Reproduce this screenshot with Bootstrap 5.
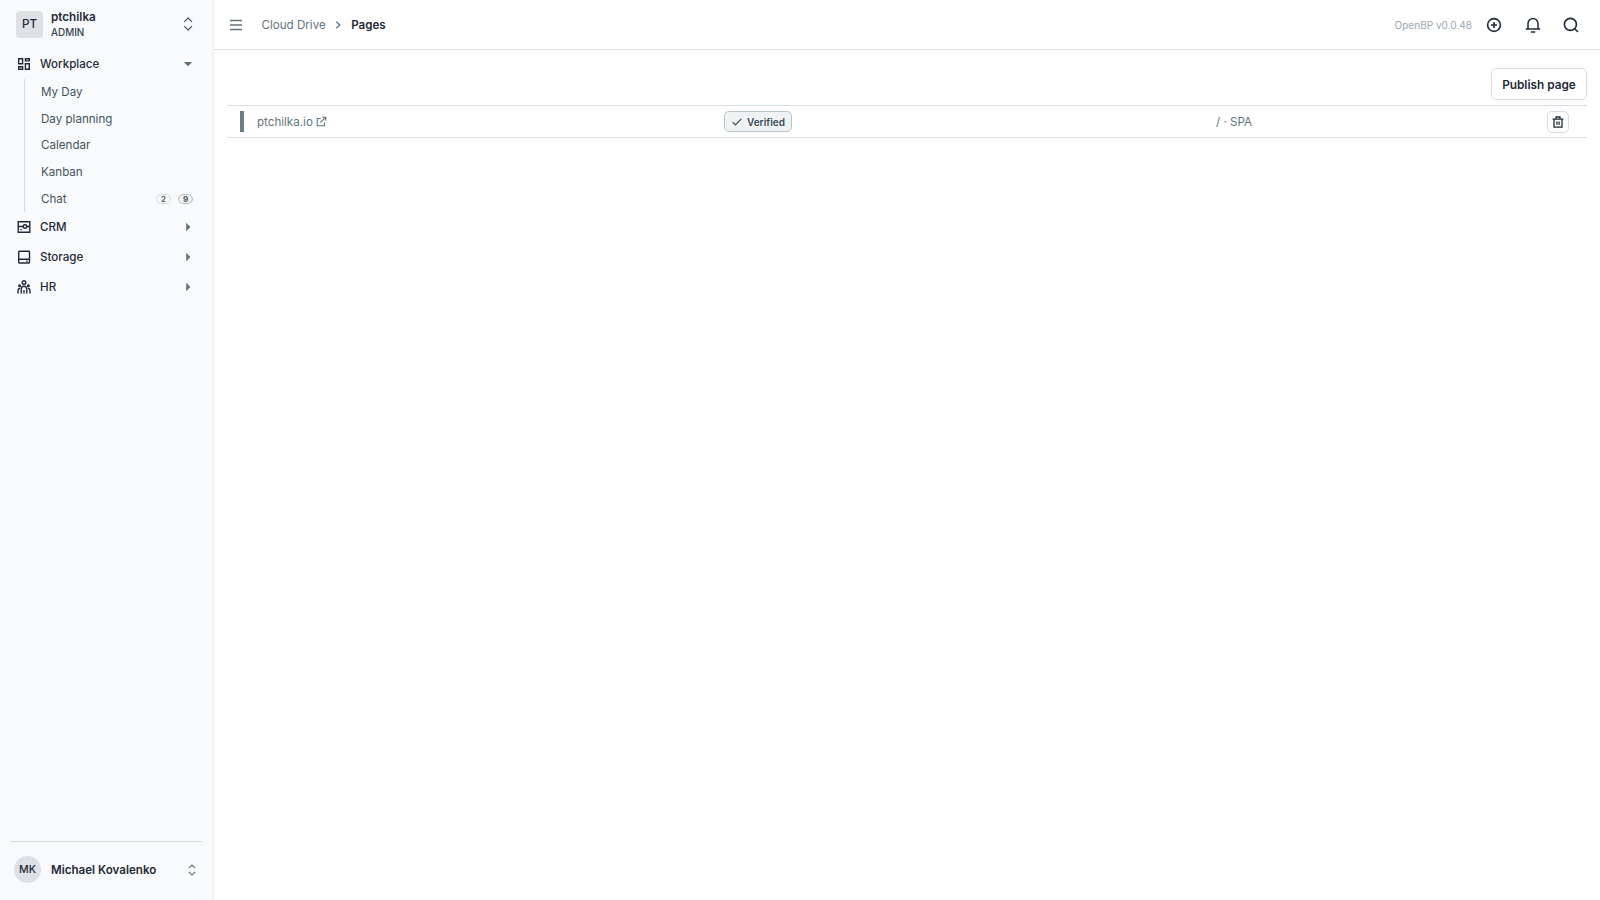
<!DOCTYPE html>
<html lang="en">
<head>
<meta charset="utf-8">
<meta name="viewport" content="width=device-width, initial-scale=1">
<title>Pages</title>
<link rel="stylesheet" href="https://cdn.jsdelivr.net/npm/bootstrap@5.3.0/dist/css/bootstrap.min.css">
<style>
body{font-family:Inter,"Liberation Sans",sans-serif;font-size:11.6px;line-height:16px;color:#1f2a37;background:#fff;fill:none;stroke:currentColor;stroke-width:1.3}
svg{display:block;flex:none}
a{color:inherit;text-decoration:none}
.sidebar{width:214px;background:#f9fafc;border-right:2px solid #f0f2f5}
.org{height:49px;padding:0 17px 1px 16px}
.avatar{width:27px;height:27px;background:#dde0e4;font-weight:500;flex:none}
.org .avatar{border-radius:4px}
.org-text{padding-top:1px}
.org-name{font-size:11.7px;line-height:15px}
.role{font-size:9.9px;line-height:14px;font-weight:500;color:#36454f}
.item{height:30px;padding:0 19px 0 17px;font-weight:500}
.item .caret{fill:#60717a;stroke:none}
.item svg:first-child{margin-right:9px}
.sub{margin-left:24px;margin-right:19px;border-left:1px solid #d5dade;color:#43535e;padding-left:16px}
.sub a{height:26.6px}
.pill{width:15px;height:10px;border:1px solid #d5dcdf;border-radius:5px;font-size:8px;line-height:9px;font-weight:600}
.pill-dark{border-color:#b6c1c5;background:#eef1f2;font-weight:700;margin-left:7px}
.account{height:59px;margin:0 10px;border-top:1px solid #d5dade;padding:1px 5px 4px 4px}
.account .avatar{font-size:10.6px}
.topbar{height:50px;border-bottom:1px solid #d9dee4;padding:0 21px 0 15px}
.soft{color:#63747d}
.version{color:#9ba8b2;font-size:10.05px}
.content{padding:18px 13px 0}
.publish{height:32px;width:96px;border:1px solid #d8dde3;border-radius:5px;background:#fff;font-size:11.8px;font-weight:600;padding:1px 0 0;line-height:16px;color:#1f2a37}
.site{margin-top:5px;height:33px;border-top:1px solid #d9dee4;border-bottom:1px solid #dce2e4;padding:0 18px 0 13px}
.marker{width:4px;height:21px;background:#6c7d85;margin-right:13px}
.col-site{width:467px}
.col-state{width:492px}
.verified{width:68px;height:21px;border:1px solid #b8c5c8;border-radius:5px;background:#eff3f4;font-size:10px;font-weight:600;color:#3a4a54}
.trash{width:22px;height:22px;border:1px solid #d8dde3;border-radius:5px;background:#fff;padding:0;color:#1f2a37}
</style>
</head>
<body>
<div class="d-flex vh-100 overflow-hidden">
  <aside class="sidebar d-flex flex-column flex-shrink-0">
    <div class="org d-flex align-items-center">
      <div class="avatar d-flex align-items-center justify-content-center">PT</div>
      <div class="org-text ms-2 flex-grow-1"><div class="org-name fw-semibold">ptchilka</div><div class="role">ADMIN</div></div>
      <svg width="14" height="14" viewBox="0 0 14 14" stroke="#52626b"><path d="M3.2 4.9L7.1 1l3.9 3.9M3.2 9.1L7.1 13 11 9.1"/></svg>
    </div>
    <nav>
      <a href="#" class="item d-flex align-items-center">
        <svg width="14" height="14" viewBox="0 0 14 14" stroke-width="1.4"><path d="M1.7 1.7h3.9v5.1H1.7zM8.4 1.7h3.9v2.2H8.4zM8.4 6.8h3.9v5.5H8.4zM1.7 9.8h3.9v2.5H1.7z"/></svg>
        <span class="flex-grow-1">Workplace</span>
        <svg class="caret" width="10" height="10" viewBox="0 0 10 10"><path d="M.8 3h8.4L5 7.2z"/></svg>
      </a>
      <div class="sub">
        <a href="#" class="d-flex align-items-center">My Day</a>
        <a href="#" class="d-flex align-items-center">Day planning</a>
        <a href="#" class="d-flex align-items-center">Calendar</a>
        <a href="#" class="d-flex align-items-center">Kanban</a>
        <a href="#" class="d-flex align-items-center"><span class="flex-grow-1">Chat</span><span class="pill text-center">2</span><span class="pill pill-dark text-center">9</span></a>
      </div>
      <a href="#" class="item d-flex align-items-center">
        <svg width="14" height="14" viewBox="0 0 14 14" stroke-width="1.4"><path d="M1.2 1.7h11.6v10.6H1.2zM1.2 6.5h5M9.9 6.5h2.9M3.3 9.6h1.5"/><circle cx="8" cy="6.5" r="1.8"/></svg>
        <span class="flex-grow-1">CRM</span>
        <svg class="caret" width="10" height="10" viewBox="0 0 10 10"><path d="M3.2.8v8.4L7.4 5z"/></svg>
      </a>
      <a href="#" class="item d-flex align-items-center">
        <svg width="14" height="14" viewBox="0 0 14 14" stroke-width="1.4"><rect x="1.7" y="1.2" width="10.8" height="11.8" rx=".7"/><path d="M1.7 9.3h10.8M9.4 11.2h1.2"/></svg>
        <span class="flex-grow-1">Storage</span>
        <svg class="caret" width="10" height="10" viewBox="0 0 10 10"><path d="M3.2.8v8.4L7.4 5z"/></svg>
      </a>
      <a href="#" class="item d-flex align-items-center">
        <svg width="14" height="14" viewBox="0 0 14 14" stroke-width="1.4"><circle cx="7" cy="2.5" r="1.8"/><path d="M4.2 13.4V9.1a2.8 2.8 0 0 1 5.6 0v4.3M7 10v3.4M1 13.4v-2.6c0-1.4.6-2.2 1.9-2.5M13 13.4v-2.6c0-1.4-.6-2.2-1.9-2.5"/><g fill="currentColor" stroke="none"><circle cx="2.6" cy="5.7" r="1.5"/><circle cx="11.4" cy="5.7" r="1.5"/></g></svg>
        <span class="flex-grow-1">HR</span>
        <svg class="caret" width="10" height="10" viewBox="0 0 10 10"><path d="M3.2.8v8.4L7.4 5z"/></svg>
      </a>
    </nav>
    <div class="account d-flex align-items-center mt-auto">
      <div class="avatar rounded-circle d-flex align-items-center justify-content-center">MK</div>
      <div class="flex-grow-1 fw-semibold" style="margin-left:10px">Michael Kovalenko</div>
      <svg width="10" height="12" viewBox="0 0 10 12" stroke="#60717a" stroke-width="1.1"><path d="M1.9 4.2L5 1.1l3.1 3.1M1.9 7.8L5 10.9l3.1-3.1"/></svg>
    </div>
  </aside>
  <main class="flex-grow-1">
    <header class="topbar d-flex align-items-center">
      <svg class="soft" width="14" height="14" viewBox="0 0 14 14" stroke-width="1.6"><path d="M1 2.5h12M1 7h12M1 11.5h12"/></svg>
      <a href="#" class="soft" style="margin-left:18.5px">Cloud Drive</a>
      <svg class="soft" width="10" height="10" viewBox="0 0 10 10" style="margin:0 8px 0 7.5px"><path d="M3.3 1.7L6.8 5 3.3 8.3"/></svg>
      <span class="fw-semibold">Pages</span>
      <span class="version ms-auto">OpenBP v0.0.48</span>
      <svg width="16" height="16" viewBox="0 0 16 16" stroke-width="1.6" style="margin-left:14px"><circle cx="8" cy="8" r="6.4"/><path d="M8 5v6M5 8h6"/></svg>
      <svg width="16" height="16" viewBox="0 0 16 16" stroke-width="1.5" style="margin-left:22.5px"><path d="M.8 12.1h14.4M3 12.1V6.5a5 5 0 0 1 10 0v5.6M5.8 14.9h4.4"/></svg>
      <svg width="16" height="16" viewBox="0 0 16 16" stroke-width="1.6" style="margin-left:22.5px"><circle cx="7.4" cy="7.4" r="6"/><path d="M11.7 11.7l3.3 3.3"/></svg>
    </header>
    <div class="content">
      <div class="d-flex justify-content-end"><button class="publish">Publish page</button></div>
      <div class="site soft d-flex align-items-center">
        <span class="marker"></span>
        <a href="#" class="col-site d-flex align-items-center">ptchilka.io
          <svg width="11" height="11" viewBox="0 0 11 11" stroke-width="1.1" style="margin-left:3px"><path d="M4.8 2.5H1.2v7.3h7.3V6.2M6.3 1.2h3.5v3.5M9.8 1.2L4.5 6.5"/></svg></a>
        <div class="col-state"><span class="verified d-flex align-items-center justify-content-center"><svg width="12" height="12" viewBox="0 0 12 12" stroke-width="1.2" style="margin-right:4px"><path d="M1.7 6.1l2.7 2.7 5.9-5.9"/></svg>Verified</span></div>
        <div>/ · SPA</div>
        <button class="trash d-flex align-items-center justify-content-center ms-auto" aria-label="Delete"><svg width="12" height="12" viewBox="0 0 12 12"><path d="M.6 3.2h10.8M2 3.2v8h8v-8M4 3.2V1h4v2.2M4.9 5.6v3.2M7.1 5.6v3.2"/></svg></button>
      </div>
    </div>
  </main>
</div>
<script src="https://cdn.jsdelivr.net/npm/bootstrap@5.3.0/dist/js/bootstrap.bundle.min.js"></script>
</body>
</html>
